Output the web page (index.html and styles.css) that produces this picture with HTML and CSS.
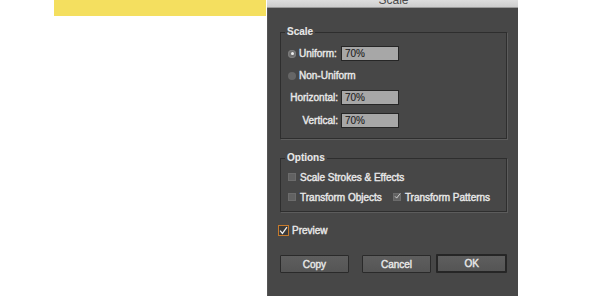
FILE: index.html
```html
<!DOCTYPE html>
<html lang="en">
<head>
    <meta charset="UTF-8">
    <meta name="viewport" content="width=device-width, initial-scale=1.0">
    <title>Scale</title>
    <link rel="stylesheet" href="styles.css">
</head>
<body>
    <div class="stage">
        <div class="banner"></div>
        <div class="dialog">
            <div class="titlebar"><span>Scale</span></div>
            <div class="dialog-body">
                <fieldset class="group">
                    <legend>Scale</legend>
                    <div class="group-rows scale-rows">
                        <div class="field">
                            <div class="field-label left"><span class="radio on"></span>Uniform:</div>
                            <div class="input">70%</div>
                        </div>
                        <div class="field">
                            <div class="field-label left wide"><span class="radio"></span>Non-Uniform</div>
                        </div>
                        <div class="field">
                            <div class="field-label">Horizontal:</div>
                            <div class="input">70%</div>
                        </div>
                        <div class="field vertical">
                            <div class="field-label">Vertical:</div>
                            <div class="input">70%</div>
                        </div>
                    </div>
                </fieldset>

                <fieldset class="group options">
                    <legend>Options</legend>
                    <div class="group-rows option-rows">
                        <div class="check-row">
                            <span class="check"><span class="box"></span>Scale Strokes &amp; Effects</span>
                        </div>
                        <div class="check-row">
                            <span class="check"><span class="box"></span>Transform Objects</span>
                            <span class="check patterns"><span class="box">
                                <svg viewBox="0 0 10 10" width="10" height="10"><path d="M1.5 5.5 L3.8 8 L8.8 1.5" fill="none" stroke="#e2e2e2" stroke-width="1.2"/></svg>
                            </span>Transform Patterns</span>
                        </div>
                    </div>
                </fieldset>

                <div class="preview">
                    <span class="preview-box">
                        <svg viewBox="0 0 10 10" width="9" height="9"><path d="M1.2 5.2 L3.8 8.2 L8.8 1.2" fill="none" stroke="#f0f0f0" stroke-width="1.4"/></svg>
                    </span>
                    Preview
                </div>

                <div class="buttons">
                    <button class="btn">Copy</button>
                    <button class="btn cancel">Cancel</button>
                    <button class="btn ok">OK</button>
                </div>
            </div>
        </div>
    </div>
</body>
</html>
```

FILE: styles.css
```css
body {
    margin: 0;
    background-color: #ffffff;
    font-family: "Liberation Sans", Arial, sans-serif;
    font-size: 10px;
}
.stage {
    display: flex;
    align-items: flex-start;
    padding-left: 54px;
    height: 300px;
}
.banner {
    width: 212px;
    height: 16px;
    background-color: #f4df5f;
    margin-right: 1px;
}
.dialog {
    width: 251px;
    height: 296px;
    background-color: #474747;
    box-shadow: inset 1px 0 0 #555555;
}
.titlebar {
    height: 8px;
    overflow: hidden;
    background: linear-gradient(#dedede, #cdcdcd);
    border-bottom: 1px solid #9a9a9a;
    box-sizing: border-box;
    text-align: center;
    color: #4a4a4a;
    font-size: 12px;
}
.titlebar span {
    display: block;
    line-height: 12px;
    margin-top: -6px;
    padding-left: 2px;
}
.dialog-body {
    padding: 18px 11px 0 13px;
    color: #e8e8e8;
    -webkit-text-stroke: 0.4px #e8e8e8;
}
.group {
    margin: 0;
    padding: 0;
    border: 1px solid #2e2e2e;
    box-shadow: 1px 1px 0 #5c5c5c;
    min-width: 0;
}
.group legend {
    margin-left: 4px;
    padding: 0 2px;
    line-height: 12px;
    font-weight: bold;
    -webkit-text-stroke: 0.1px #e8e8e8;
}
.group-rows {
    display: flex;
    flex-direction: column;
    padding-left: 7px;
}
.scale-rows {
    gap: 7px;
    padding-top: 8px;
    padding-bottom: 10px;
}
.field {
    display: flex;
    align-items: center;
    height: 15px;
}
.field.vertical {
    margin-top: 1px;
}
.field-label {
    width: 50px;
    margin-right: 3px;
    text-align: right;
    white-space: nowrap;
}
.field-label.left {
    display: flex;
    align-items: center;
    text-align: left;
}
.radio {
    width: 8px;
    height: 8px;
    border-radius: 50%;
    background-color: #666666;
    margin-right: 3px;
    flex-shrink: 0;
    display: flex;
    align-items: center;
    justify-content: center;
}
.radio.on {
    background-color: #6e6e6e;
    box-shadow: inset 0 0 0 1px #7c7c7c;
}
.radio.on::after {
    content: "";
    width: 3px;
    height: 3px;
    border-radius: 50%;
    background-color: #eeeeee;
}
.input {
    height: 13px;
    line-height: 13px;
    background-color: #a7a7a7;
    border: 1px solid #262626;
    color: #202020;
    -webkit-text-stroke: 0.1px #202020;
    padding-left: 3px;
    width: 53px;
}
.options {
    margin-top: 13px;
}
.option-rows {
    gap: 8px;
    padding-top: 7px;
    padding-bottom: 8px;
}
.check-row {
    display: flex;
    align-items: center;
    height: 12px;
}
.check {
    display: flex;
    align-items: center;
    white-space: nowrap;
}
.check .box {
    width: 8px;
    height: 8px;
    background-color: #626262;
    box-shadow: inset 0 0 0 1px #6c6c6c;
    margin-right: 4px;
    display: flex;
    align-items: center;
    justify-content: center;
}
.check .box svg {
    margin-top: -2px;
    margin-left: 1px;
}
.check.patterns {
    margin-left: 11px;
}
.preview {
    display: flex;
    align-items: center;
    margin-top: 13px;
    margin-left: -2px;
    height: 11px;
}
.preview-box {
    width: 9px;
    height: 9px;
    border: 1px solid #c67a2c;
    background-color: #3a3a3a;
    margin-right: 3px;
    display: flex;
    align-items: center;
    justify-content: center;
}
.buttons {
    display: flex;
    margin-top: 19px;
}
.btn {
    width: 69px;
    height: 18px;
    padding: 0;
    border: 1px solid #2a2a2a;
    border-radius: 1px;
    background: linear-gradient(#5e5e5e, #555555);
    color: #e8e8e8;
    font-family: "Liberation Sans", Arial, sans-serif;
    font-size: 10px;
    -webkit-text-stroke: 0.4px #e8e8e8;
}
.btn.cancel {
    margin-left: 13px;
    width: 70px;
}
.btn.ok {
    margin-left: 5px;
    width: 71px;
    height: 19px;
    margin-top: -1px;
    border: 2px solid #262626;
}
```
